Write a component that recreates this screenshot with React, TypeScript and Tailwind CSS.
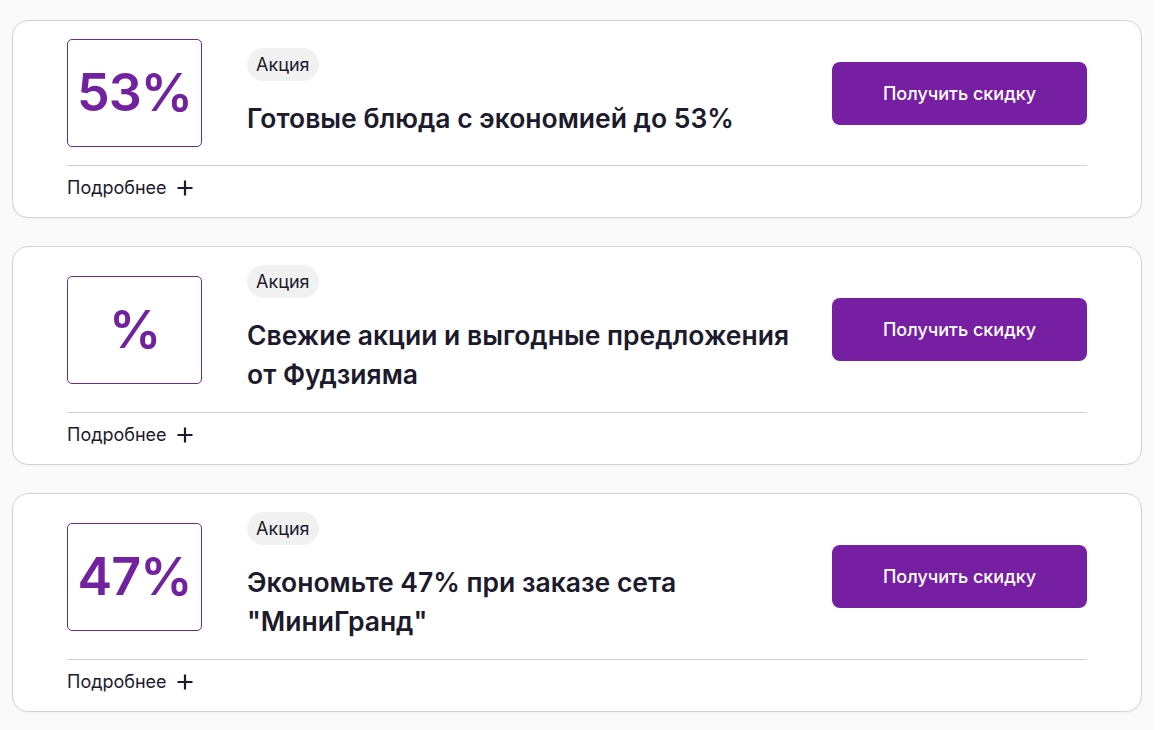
import React from "react";

type Deal = { value: string; title: React.ReactNode };

const deals: Deal[] = [
  { value: "53%", title: "Готовые блюда с экономией до 53%" },
  { value: "%", title: "Свежие акции и выгодные предложения от Фудзияма" },
  { value: "47%", title: 'Экономьте 47% при заказе сета "МиниГранд"' },
];

function Plus() {
  return (
    <svg width="16" height="16" viewBox="0 0 16 16" fill="none">
      <path d="M8 0.5v15M0.5 8h15" stroke="#1c1a2c" strokeWidth="2.2" />
    </svg>
  );
}

function Card({ deal }: { deal: Deal }) {
  return (
    <div className="bg-white border border-[#d3d3d3] rounded-[16px] shadow-[0_1px_2px_rgba(0,0,0,0.04)] px-[54px] pt-[18px]">
      <div className="flex items-center">
        <div className="w-[135px] h-[108px] shrink-0 border border-[#6b2a93] rounded-[5px] flex items-center justify-center">
          <span className="text-[52px] leading-none font-semibold text-[#72219f] tracking-[-1px]">
            {deal.value}
          </span>
        </div>
        <div className="ml-[45px] flex-1 min-w-0 flex flex-col items-start">
          <span className="h-[33px] px-[9px] rounded-full bg-[#f1f1f1] text-[18px] leading-[33px] text-[#1c1a2c]">
            Акция
          </span>
          <div className="mt-[18px] pr-[12px] text-[26.5px] leading-[39px] font-semibold text-[#1c1a2c]">
            {deal.title}
          </div>
        </div>
        <button className="ml-[12px] w-[255px] h-[63px] shrink-0 rounded-[8px] bg-[#761fa3] text-white text-[18px] font-medium">
          Получить скидку
        </button>
      </div>
      <div className="mt-[18px] border-t border-[#d3d3d3] pt-[10px] pb-[17px] flex items-center gap-[10px]">
        <span className="text-[18px] leading-[24px] text-[#1c1a2c]">Подробнее</span>
        <Plus />
      </div>
    </div>
  );
}

export default function App() {
  return (
    <div
      className="min-h-[730px] bg-[#fafafa] px-[12px] pt-[20px] pb-[20px] flex flex-col gap-[28px] w-[1154px]"
      style={{ fontFamily: "Inter, 'Noto Sans', sans-serif" }}
    >
      {deals.map((d, i) => (
        <Card key={i} deal={d} />
      ))}
    </div>
  );
}
